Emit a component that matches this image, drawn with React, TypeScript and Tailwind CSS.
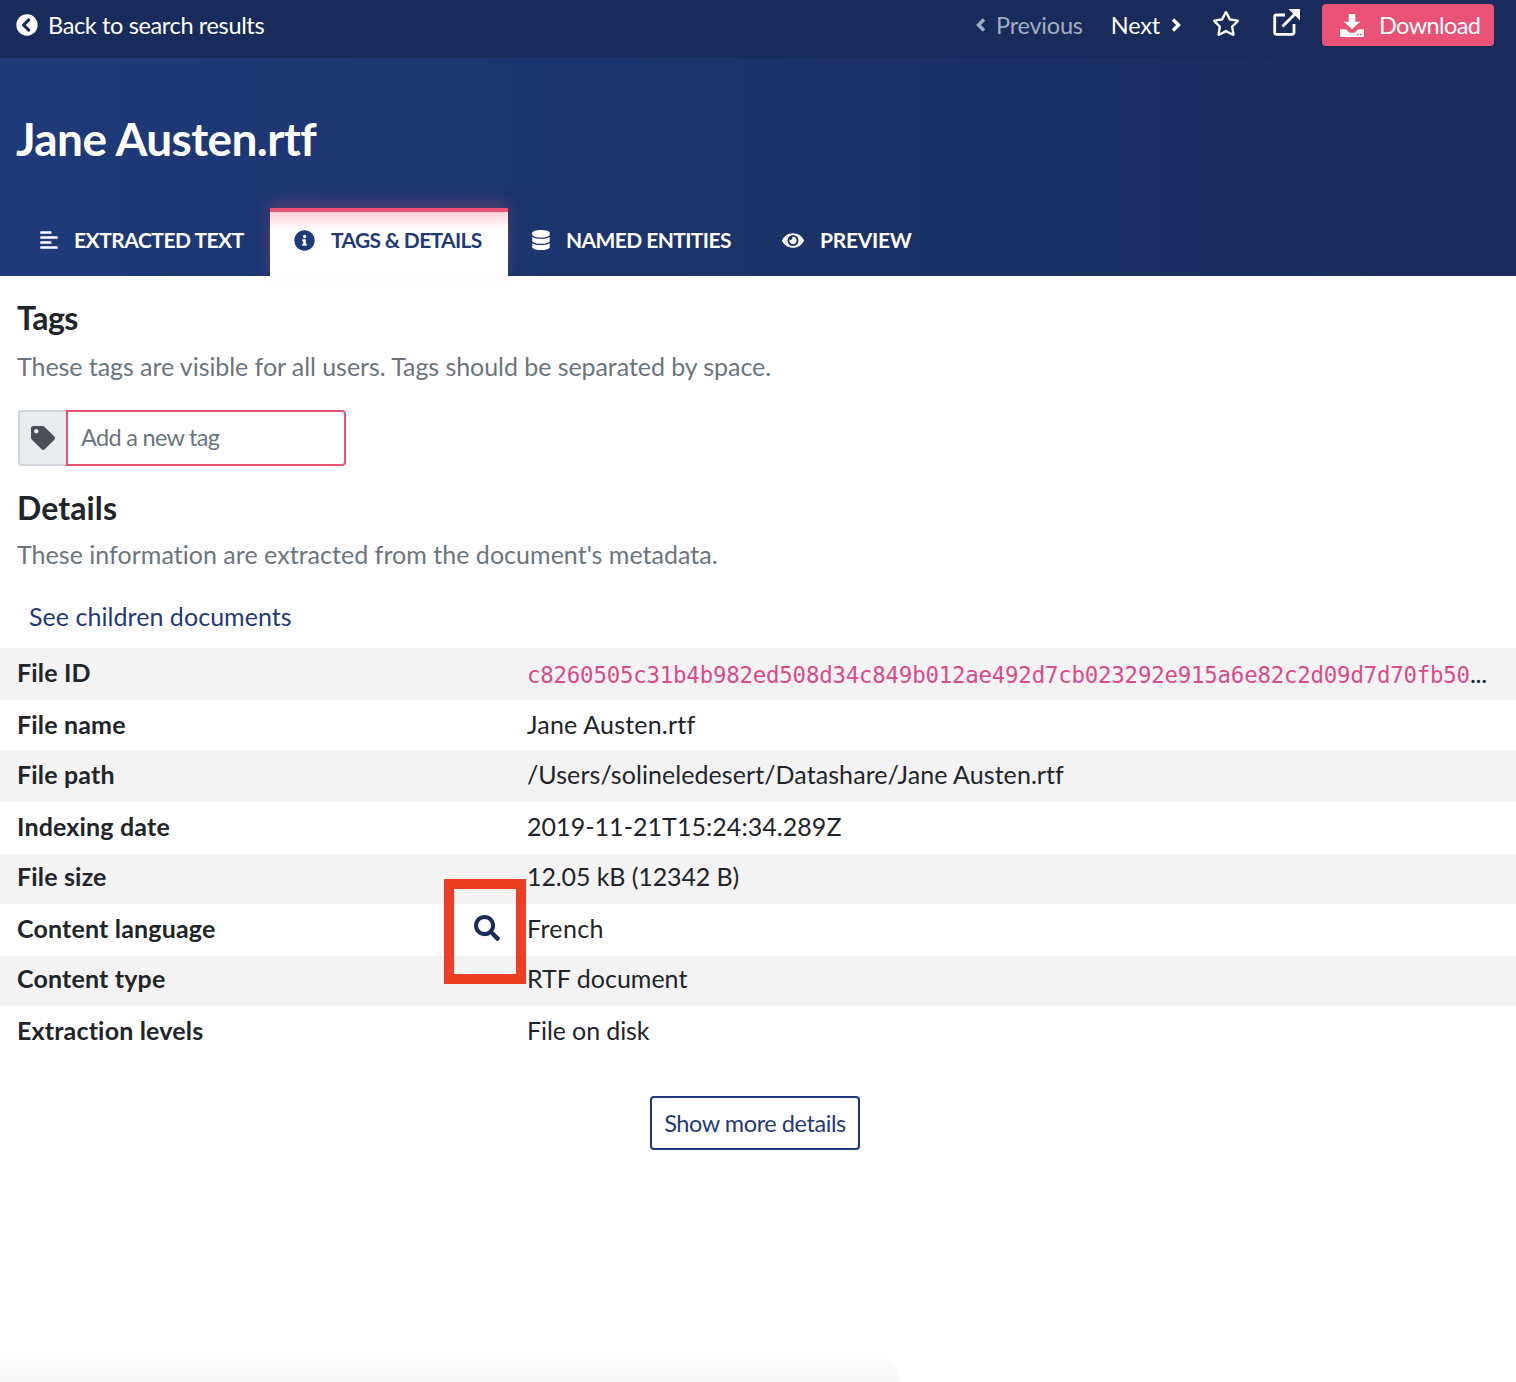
import React from 'react';
import {
  FaAlignLeft,
  FaChevronCircleLeft,
  FaDatabase,
  FaEye,
  FaInfoCircle,
  FaRegStar,
  FaSearch,
  FaTag,
} from 'react-icons/fa';

const DownloadIcon = () => (
  <svg viewBox="0 0 22 22" className="h-[24px] w-[24px]" fill="currentColor">
    <path d="M8 1h6v7h4.500L11 15 3.500 8H8z" />
    <path d="M0 15h5.500l3 3h5l3-3H22v7H0z" />
    <rect x="15.500" y="19" width="1.500" height="1.500" fill="#ea5275" />
    <rect x="18.200" y="19" width="1.500" height="1.500" fill="#ea5275" />
  </svg>
);

const ExternalIcon = () => (
  <svg viewBox="0 0 27 27" className="h-[27px] w-[27px]" fill="none" stroke="currentColor" strokeWidth="2.800">
    <path d="M12 6H3.500A1.800 1.800 0 0 0 1.700 7.800v15.700a1.800 1.800 0 0 0 1.800 1.800h15.700a1.800 1.800 0 0 0 1.800-1.800V15" />
    <path d="M9.500 17.500 23 4" />
    <path d="M15.500 0H27v11.500z" fill="currentColor" stroke="none" />
  </svg>
);

const Chevron = ({ dir }: { dir: 'left' | 'right' }) => (
  <svg viewBox="0 0 10 14" className="h-[14px] w-[10px]" fill="none" stroke="currentColor" strokeWidth="3.400">
    <path d={dir === 'left' ? 'M8 1.500 2.500 7 8 12.500' : 'M2 1.500 7.500 7 2 12.500'} />
  </svg>
);

const rows = [
  { label: 'File ID', value: 'c8260505c31b4b982ed508d34c849b012ae492d7cb023292e915a6e82c2d09d7d70fb50', height: 'h-[52px]', shade: true, code: true, pad: 'pb-[2px]', track: '' },
  { label: 'File name', value: 'Jane Austen.rtf', height: 'h-[50px]', shade: false, pad: 'pb-0', track: 'tracking-[0.200px]' },
  { label: 'File path', value: '/Users/solineledesert/Datashare/Jane Austen.rtf', height: 'h-[52px]', shade: true, pad: 'pb-[2px]', track: 'tracking-[0.070px]' },
  { label: 'Indexing date', value: '2019-11-21T15:24:34.289Z', height: 'h-[52px]', shade: false, pad: 'pb-[2px]', track: 'tracking-[0.050px]' },
  { label: 'File size', value: '12.05 kB (12342 B)', height: 'h-[50px]', shade: true, pad: 'pb-[4px]', track: 'tracking-[-0.100px]' },
  { label: 'Content language', value: 'French', height: 'h-[52px]', shade: false, search: true, pad: 'pb-[2px]', track: 'tracking-[0.350px]' },
  { label: 'Content type', value: 'RTF document', height: 'h-[50px]', shade: true, pad: 'pb-[4px]', track: 'tracking-[0px]' },
  { label: 'Extraction levels', value: 'File on disk', height: 'h-[52px]', shade: false, pad: 'pb-[2px]', track: 'tracking-[-0.100px]' },
];

const Tab = ({ icon, label, width, track, active }: { icon: React.ReactNode; label: string; width: string; track: string; active?: boolean }) => (
  <div
    className={`${width} ${track} flex h-[68px] items-center text-[21px] font-bold ${
      active
        ? 'border-t-4 border-[#ea5275] bg-gradient-to-b from-[#fbd0da] from-0% to-white to-28% pb-[8px] text-[#1f3a7a] shadow-[0_-6px_14px_rgba(234,82,117,0.25)]'
        : 'pb-[4px] text-white'
    }`}
  >
    {icon}
    {label}
  </div>
);

export default function App() {
  return (
    <div className="relative h-[1382px] overflow-hidden bg-white font-['Lato',sans-serif] text-[#212529]">
      <header className="flex h-[58px] items-center justify-between bg-[#182b5a] pb-[8px] pl-[16px] pr-[22px] text-white">
        <div className="flex items-center text-[23.500px] tracking-[-0.360px]">
          <FaChevronCircleLeft className="mr-[10px] h-[22px] w-[22px]" />
          <span className="pt-[2px]">Back to search results</span>
        </div>
        <div className="flex items-center text-[23.500px] tracking-[-0.200px]">
          <div className="flex items-center text-[#a3adc2]">
            <span className="mr-[10px]">
              <Chevron dir="left" />
            </span>
            <span className="pt-[2px]">Previous</span>
          </div>
          <div className="ml-[28px] flex items-center">
            <span className="pt-[2px]">Next</span>
            <span className="ml-[11px]">
              <Chevron dir="right" />
            </span>
          </div>
          <FaRegStar className="mb-[3px] ml-[31px] h-[27px] w-[28px]" />
          <div className="mb-[5px] ml-[33px]">
            <ExternalIcon />
          </div>
          <button className="ml-[22px] flex h-[42px] w-[172px] items-center gap-[15px] rounded-[4px] bg-[#ea5275] pl-[18px] tracking-[-0.600px] text-white">
            <DownloadIcon />
            <span className="pt-[2px]">Download</span>
          </button>
        </div>
      </header>

      <section className="flex h-[218px] flex-col justify-between bg-gradient-to-r from-[#1f3a7a] to-[#182b5a]">
        <h1 className="pl-[16px] pt-[51px] text-[46px] font-bold leading-[60px] tracking-[-0.600px] text-white">Jane Austen.rtf</h1>
        <nav className="flex">
          <Tab icon={<FaAlignLeft className="ml-[39px] mr-[15px] h-[20px] w-[20px]" />} label="EXTRACTED TEXT" width="w-[270px]" track="tracking-[-0.500px]" />
          <Tab icon={<FaInfoCircle className="ml-[24px] mr-[16px] h-[21px] w-[21px]" />} label="TAGS & DETAILS" width="w-[238px]" track="tracking-[-0.650px]" active />
          <Tab icon={<FaDatabase className="ml-[24px] mr-[16px] h-[20px] w-[18px]" />} label="NAMED ENTITIES" width="w-[250px]" track="tracking-[-0.600px]" />
          <Tab icon={<FaEye className="ml-[24px] mr-[16px] h-[21px] w-[22px]" />} label="PREVIEW" width="w-[160px]" track="tracking-[-0.300px]" />
        </nav>
      </section>

      <main>
        <div className="pl-[17px]">
          <h2 className="pt-[23px] text-[32px] font-bold leading-[38px] tracking-[-0.500px]">Tags</h2>
          <p className="pt-[12px] text-[25px] leading-[34px] tracking-[-0.060px] text-[#6c757d]">
            These tags are visible for all users. Tags should be separated by space.
          </p>
          <div className="mt-[27px] flex h-[56px] w-[329px] pl-[1px]">
            <div className="flex w-[48px] items-center justify-center rounded-l-[4px] border-2 border-r-0 border-[#ced4da] bg-[#e9ecef] text-[#495057]">
              <FaTag className="h-[24px] w-[24px]" />
            </div>
            <div className="flex flex-1 items-center rounded-r-[4px] border-2 border-[#ea5275] pl-[13px] text-[23.500px] tracking-[-0.700px] text-[#6c757d]">
              Add a new tag
            </div>
          </div>
          <h2 className="pt-[23px] text-[32px] font-bold leading-[38px] tracking-[0.100px]">Details</h2>
          <p className="pt-[10px] text-[25px] leading-[34px] tracking-[0.030px] text-[#6c757d]">
            These information are extracted from the document's metadata.
          </p>
          <a className="block pl-[12px] pt-[28px] text-[25px] leading-[34px] tracking-[0.050px] text-[#1f3a7a]">See children documents</a>
        </div>

        <div className="mt-[15px]">
          {rows.map((row) => (
            <div key={row.label} className={`${row.height} flex items-center ${row.shade ? 'bg-[#f3f3f3]' : 'bg-white'}`}>
              <div className={`${row.pad} relative flex h-full w-[527px] shrink-0 items-center pl-[17px] text-[25px] font-bold tracking-[0.170px]`}>
                {row.label}
                {row.search && <FaSearch className="absolute left-[474px] top-[11px] h-[26px] w-[26px] text-[#182b5a]" />}
              </div>
              {row.code ? (
                <div className="flex items-baseline text-[22.400px] tracking-[-0.200px] text-[#dc4a8b]">
                  <span className="font-['DejaVu_Sans_Mono',monospace]">{row.value}</span>
                  <span className="font-['Lato',sans-serif] text-[25px] text-[#212529]">...</span>
                </div>
              ) : (
                <div className={`${row.pad} ${row.track} text-[25px]`}>{row.value}</div>
              )}
            </div>
          ))}
        </div>

        <div className="flex justify-center pt-[38px]">
          <button className="ml-[-6px] flex h-[54px] w-[210px] items-center justify-center rounded-[4px] border-2 border-[#1f3a7a] pt-[2px] text-[23.500px] tracking-[-0.430px] text-[#1f3a7a]">
            Show more details
          </button>
        </div>
      </main>

      {/* red annotation frame drawn over the table */}
      <div className="absolute left-[444px] top-[879px] h-[105px] w-[82px] border-[10px] border-[#ee3f24]" />
      <div className="absolute bottom-0 left-0 h-[32px] w-[900px] rounded-tr-[40px] bg-gradient-to-b from-white to-[#f8f8f8]" />
    </div>
  );
}
